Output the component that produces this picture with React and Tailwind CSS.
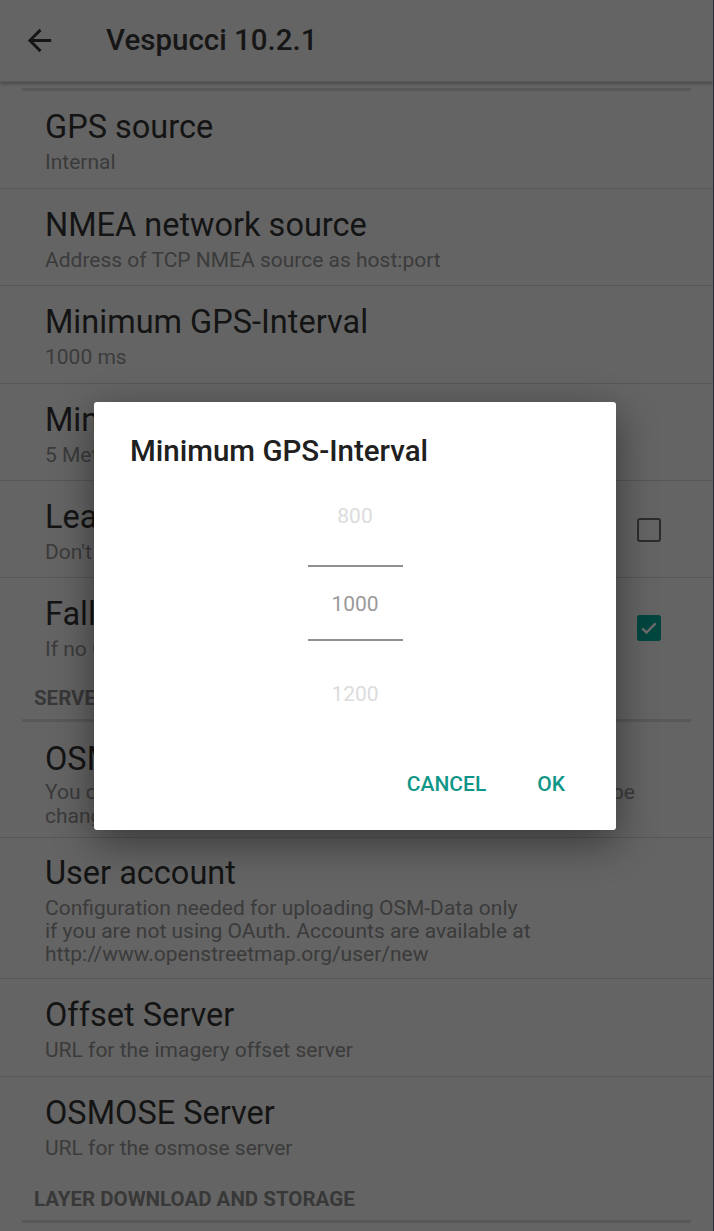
import React from "react";

const Row = ({ title, lines, right, last, pt = 18, mt = 5, lh = 24, pb = 13.5 }) => (
  <div
    className={`flex items-center pl-[45px] pr-[52px] ${last ? "" : "border-b border-[#565656]"}`}
    style={{ paddingTop: pt, paddingBottom: pb }}
  >
    <div className="flex-1 min-w-0">
      <div className="text-[32.5px] leading-[36px] text-[#141414]">{title}</div>
      <div className="text-[21px] text-[#3b3b3b]" style={{ marginTop: mt, lineHeight: `${lh}px` }}>
        {lines.map((l, i) => (
          <div key={i} className="whitespace-nowrap">{l}</div>
        ))}
      </div>
    </div>
    {right}
  </div>
);

const Header = ({ children, pt = 11.5 }) => (
  <div style={{ paddingTop: pt }}>
    <div className="pl-[34px] text-[20.5px] leading-[24px] font-bold text-[#383838]">{children}</div>
    <div className="mx-[22px] mt-[9px] h-[3px] bg-[#585858]" />
  </div>
);

export default function App() {
  return (
    <div
      className="relative w-[714px] h-[1231px] overflow-hidden bg-[#646464] border-r border-[#2b2b36]"
      style={{ fontFamily: "Roboto, 'Noto Sans', sans-serif" }}
    >
      {/* Toolbar */}
      <div className="h-[82px] flex items-center shadow-[0_2px_3px_rgba(0,0,0,0.25)] border-b border-[#595959] relative z-10">
        <svg className="ml-[22px]" width="35" height="35" viewBox="0 0 24 24" fill="#161616">
          <path d="M20 11H7.83l5.59-5.59L12 4l-8 8 8 8 1.41-1.41L7.83 13H20v-2z" />
        </svg>
        <div className="ml-[49px] text-[29.5px] font-medium text-[#161616] leading-none">Vespucci 10.2.1</div>
      </div>
      <div className="mx-[22px] mt-[6px] h-[3px] bg-[#585858]" />

      <Row title="GPS source" lines={["Internal"]} />
      <Row title="NMEA network source" lines={["Address of TCP NMEA source as host:port"]} />
      <Row title="Minimum GPS-Interval" lines={["1000 ms"]} />
      <Row title="Minimum GPS-Distance" lines={["5 Meters"]} />
      <Row
        title="Leave GPS on"
        lines={["Don't turn off GPS when the app is paused"]}
        pb={13}
        right={<div className="w-[24px] h-[24px] -mt-[3px] rounded-[3px] border-[2.5px] border-[#2c2c2c]" />}
      />
      <Row
        title="Fallback to network location"
        lines={["If no GPS fix is available use network location"]}
        last
        right={
          <div className="w-[24px] h-[26px] -mt-[2px] rounded-[3px] bg-[#00463f] flex items-center justify-center">
            <svg width="20" height="20" viewBox="0 0 24 24" fill="none" stroke="#6b6b6b" strokeWidth="3">
              <path d="M4 12.5l5 5L20 6.5" />
            </svg>
          </div>
        }
      />
      <Header>SERVERS</Header>
      <Row
        title="OSM API URL"
        lines={[
          <div className="flex w-[590px] justify-between" key="l1">
            <span>You can add additional API configurations, defaults can not</span>
            <span>be</span>
          </div>,
          "changed",
        ]}
        pt={19}
        mt={3}
        pb={9}
      />
      <Row
        title="User account"
        lines={[
          "Configuration needed for uploading OSM-Data only",
          "if you are not using OAuth. Accounts are available at",
          "http://www.openstreetmap.org/user/new",
        ]}
        pt={17}
        mt={6}
        lh={23}
        pb={12}
      />
      <Row title="Offset Server" lines={["URL for the imagery offset server"]} />
      <Row title="OSMOSE Server" lines={["URL for the osmose server"]} last />
      <Header pt={13.5}>LAYER DOWNLOAD AND STORAGE</Header>

      {/* Dialog */}
      <div className="absolute left-[94px] top-[402px] w-[522px] h-[428px] bg-white rounded-[3px] shadow-[0_12px_40px_rgba(0,0,0,0.45)] z-20 flex flex-col">
        <div className="pl-[36px] pt-[32px] text-[29.5px] leading-[34px] font-medium text-[#202020]">
          Minimum GPS-Interval
        </div>
        <div className="flex flex-col items-center mt-[36px]">
          <div className="text-[21px] leading-[24px] text-[#dcdcdc]">800</div>
          <div className="w-[95px] h-[2px] bg-[#8f8f8f] mt-[37px]" />
          <div className="text-[21px] leading-[24px] text-[#9a9a9a] mt-[25px]">1000</div>
          <div className="w-[95px] h-[2px] bg-[#8f8f8f] mt-[23px]" />
          <div className="text-[21px] leading-[24px] text-[#dcdcdc] mt-[41px]">1200</div>
        </div>
        <div className="flex justify-end items-center mt-[68px] pr-[51px] gap-[51px] text-[21px] font-medium text-[#0f9688] leading-none">
          <span>CANCEL</span>
          <span>OK</span>
        </div>
      </div>
    </div>
  );
}
